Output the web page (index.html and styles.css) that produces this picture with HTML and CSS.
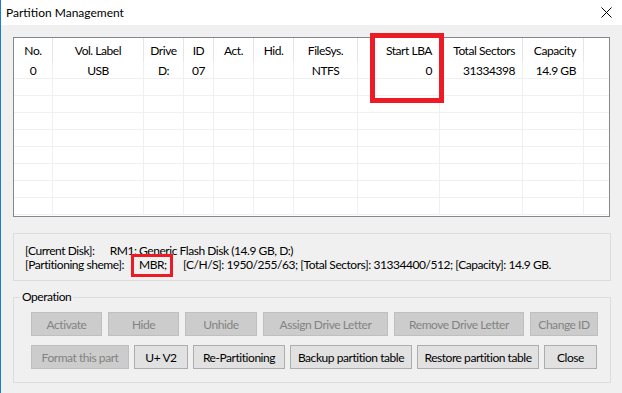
FILE: index.html
```html
<!DOCTYPE html>
<html lang="en">
<head>
    <meta charset="UTF-8">
    <title>Partition Management</title>
    <link rel="stylesheet" href="styles.css">
</head>
<body>

    <div class="window">
        <div class="titlebar">
            <span class="title">Partition Management</span>
            <svg class="close-x" width="11" height="11" viewBox="0 0 11 11">
                <path d="M0.5 0.5 L10.5 10.5 M10.5 0.5 L0.5 10.5" stroke="#000" stroke-width="1"/>
            </svg>
        </div>

        <div class="content">
            <div class="list">
                <table class="grid">
                    <thead>
                        <tr>
                            <th class="c-no">No.</th>
                            <th class="c-label">Vol. Label</th>
                            <th class="c-drive">Drive</th>
                            <th class="c-id">ID</th>
                            <th class="c-act">Act.</th>
                            <th class="c-hid">Hid.</th>
                            <th class="c-fs">FileSys.</th>
                            <th class="c-lba num">Start LBA</th>
                            <th class="c-total num">Total Sectors</th>
                            <th class="c-cap num">Capacity</th>
                            <th class="c-rest"></th>
                        </tr>
                    </thead>
                    <tbody id="rows">
                        <tr>
                            <td>0</td>
                            <td>USB</td>
                            <td>D:</td>
                            <td>07</td>
                            <td></td>
                            <td></td>
                            <td>NTFS</td>
                            <td class="num">0</td>
                            <td class="num">31334398</td>
                            <td class="num">14.9 GB</td>
                            <td></td>
                        </tr>
                    </tbody>
                </table>
            </div>

            <div class="info">
                <div class="info-line">
                    <span class="info-key key-disk">[Current Disk]:</span>
                    <span>RM1: Generic Flash Disk (14.9 GB, D:)</span>
                </div>
                <div class="info-line">
                    <span class="info-key key-scheme">[Partitioning sheme]:</span><span class="mbr">MBR;</span><span class="info-rest">[C/H/S]: 1950/255/63; [Total Sectors]: 31334400/512; [Capacity]: 14.9 GB.</span>
                </div>
            </div>

            <fieldset class="group">
                <legend>Operation</legend>
                <div class="btn-row row-one">
                    <button class="btn" style="width:71px" disabled>Activate</button>
                    <button class="btn" style="width:71px" disabled>Hide</button>
                    <button class="btn" style="width:72px" disabled>Unhide</button>
                    <button class="btn" style="width:125px" disabled>Assign Drive Letter</button>
                    <button class="btn" style="width:130px" disabled>Remove Drive Letter</button>
                    <button class="btn" style="width:68px" disabled>Change ID</button>
                </div>
                <div class="btn-row row-two">
                    <button class="btn" style="width:98px" disabled>Format this part</button>
                    <button class="btn" style="width:54px">U+ V2</button>
                    <button class="btn" style="width:92px">Re-Partitioning</button>
                    <button class="btn" style="width:122px">Backup partition table</button>
                    <button class="btn" style="width:122px">Restore partition table</button>
                    <button class="btn" style="width:53px">Close</button>
                </div>
            </fieldset>
        </div>

        <div class="mark mark-lba"></div>
    </div>

    <script>
        // empty rows to fill the list view
        const rows = document.getElementById('rows');
        for (let i = 0; i < 8; i++) {
            const tr = document.createElement('tr');
            tr.innerHTML = '<td></td>'.repeat(11);
            rows.appendChild(tr);
        }
    </script>
</body>
</html>
```

FILE: styles.css
```css
* {
    box-sizing: border-box;
}
body {
    margin: 0;
    background-color: #f0f0f0;
    font-family: Lato, "Liberation Sans", sans-serif;
    font-size: 12px;
    letter-spacing: -0.45px;
    color: #000;
}
.window {
    position: relative;
    width: 622px;
    height: 393px;
    border-left: 1px solid #1a7bd4;
    background-color: #f0f0f0;
}
.titlebar {
    height: 25px;
    background-color: #fff;
    display: flex;
    align-items: center;
    justify-content: space-between;
    padding: 0 10px 1px 5px;
}
.title {
    font-size: 12px;
    letter-spacing: 0;
}
.content {
    padding: 12px 12px 0 12px;
}
.list {
    width: 597px;
    height: 180px;
    border: 1px solid #828790;
    background-color: #fff;
    overflow: hidden;
}
.grid {
    table-layout: fixed;
    border-collapse: separate;
    border-spacing: 0;
    width: 595px;
}
.grid th {
    height: 24px;
    font-weight: normal;
    text-align: center;
    border-right: 1px solid #e5e5e5;
    padding: 0;
}
.grid td {
    height: 17px;
    text-align: center;
    border-right: 1px solid #f0f0f0;
    border-bottom: 1px solid #f0f0f0;
    padding: 1px 0 0 0;
    line-height: 15px;
}
.grid .num {
    text-align: right;
    padding-right: 7px;
}
.c-no { width: 39px; }
.c-label { width: 91px; }
.c-drive { width: 40px; }
.c-id { width: 30px; }
.c-act { width: 40px; }
.c-hid { width: 40px; }
.c-fs { width: 64px; }
.c-lba { width: 82px; }
.c-total { width: 83px; }
.c-cap { width: 61px; }
.c-rest { width: 25px; }
.grid th.c-rest,
.grid tr td:last-child {
    border-right: none;
}
.info {
    width: 598px;
    margin-top: 16px;
    border: 1px solid #dcdcdc;
    padding: 10px 11px 7px 11px;
}
.info-line {
    line-height: 14px;
    white-space: nowrap;
}
.info-key {
    display: inline-block;
}
.key-disk {
    width: 82px;
}
.key-scheme {
    width: 106px;
}
.mbr {
    display: inline-block;
    border: 3px solid #ed1c24;
    padding: 1px 5px 2px 5px;
    margin: -5px 0 -4px 0;
    width: 42px;
}
.info-rest {
    margin-left: 10px;
}
.group {
    width: 598px;
    margin: 9px 0 0 0;
    padding: 8px 0 0 17px;
    border: 1px solid #dcdcdc;
    height: 93px;
}
.group legend {
    padding: 0 2px;
    margin-left: -11px;
    line-height: 14px;
}
.btn-row {
    display: flex;
}
.row-one {
    gap: 6px;
}
.row-two {
    gap: 5px;
    margin-top: 9px;
}
.btn {
    height: 24px;
    font-family: inherit;
    font-size: 12px;
    letter-spacing: -0.45px;
    padding: 0;
    background-color: #e1e1e1;
    border: 1px solid #adadad;
    color: #000;
}
.btn:disabled {
    background-color: #cccccc;
    border-color: #bfbfbf;
    color: #838383;
}
.mark {
    position: absolute;
    border: 5px solid #ed1c24;
}
.mark-lba {
    left: 369px;
    top: 33px;
    width: 74px;
    height: 70px;
}
```
